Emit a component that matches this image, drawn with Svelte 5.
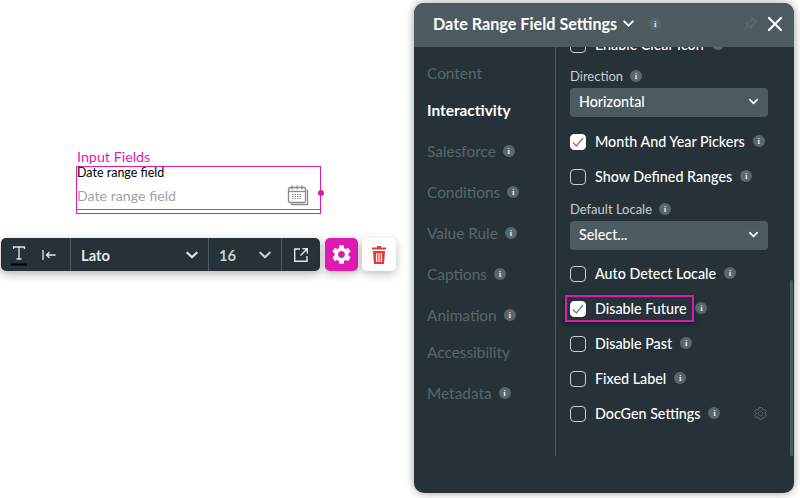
<script>
  const sections = [
    { name: "Content" },
    { name: "Interactivity", active: true },
    { name: "Salesforce", info: true },
    { name: "Conditions", info: true },
    { name: "Value Rule", info: true },
    { name: "Captions", info: true },
    { name: "Animation", info: true },
    { name: "Accessibility" },
    { name: "Metadata", info: true }
  ];

  const settings = [
    { type: "check", label: "Enable Clear Icon", info: true },
    { type: "select", label: "Direction", value: "Horizontal" },
    { type: "check", label: "Month And Year Pickers", checked: true, info: true },
    { type: "check", label: "Show Defined Ranges", info: true },
    { type: "select", label: "Default Locale", value: "Select...", shifted: true },
    { type: "check", label: "Auto Detect Locale", info: true },
    { type: "check", label: "Disable Future", checked: true, info: true, highlight: true },
    { type: "check", label: "Disable Past", info: true },
    { type: "check", label: "Fixed Label", info: true },
    { type: "check", label: "DocGen Settings", info: true, gear: true }
  ];

  const cogPath = "M19.14 12.94c.04-.3.06-.61.06-.94 0-.32-.02-.64-.07-.94l2.03-1.58a.49.49 0 0 0 .12-.61l-1.92-3.32a.488.488 0 0 0-.59-.22l-2.39.96c-.5-.38-1.03-.7-1.62-.94l-.36-2.54a.484.484 0 0 0-.48-.41h-3.84c-.24 0-.43.17-.47.41l-.36 2.54c-.59.24-1.13.57-1.62.94l-2.39-.96c-.22-.08-.47 0-.59.22L2.74 8.87c-.12.21-.08.47.12.61l2.03 1.58c-.05.3-.09.63-.09.94s.02.64.07.94l-2.03 1.58a.49.49 0 0 0-.12.61l1.92 3.32c.12.22.37.29.59.22l2.39-.96c.5.38 1.03.7 1.62.94l.36 2.54c.05.24.24.41.48.41h3.84c.24 0 .44-.17.47-.41l.36-2.54c.59-.24 1.13-.56 1.62-.94l2.39.96c.22.08.47 0 .59-.22l1.92-3.32c.12-.22.07-.47-.12-.61l-2.01-1.58zM12 15.6c-1.98 0-3.6-1.62-3.6-3.6s1.62-3.6 3.6-3.6 3.6 1.62 3.6 3.6-1.62 3.6-3.6 3.6z";
</script>

{#snippet infoIcon()}
  <span class="info">i</span>
{/snippet}

{#snippet chevron(size)}
  <svg class="chev" width={size} height={size} viewBox="0 0 12 12" fill="none" stroke="currentColor" stroke-width="1.8" stroke-linecap="round" stroke-linejoin="round">
    <path d="M2 4l4 4 4-4" />
  </svg>
{/snippet}

<div class="page">
  <div class="field-wrap">
    <div class="field-tag">Input Fields</div>
    <div class="field">
      <div class="field-label">Date range field</div>
      <div class="field-input">
        <span>Date range field</span>
        <svg class="cal" width="22" height="22" viewBox="0 0 22 22" fill="none" stroke="#8a8a8a">
          <path d="M19.5 6.5h1v14h-16v-1" stroke-width="1.3" />
          <rect x="1.5" y="3.5" width="17" height="15" rx="1.5" stroke-width="1.3" />
          <path d="M1.5 7.5h17" stroke-width="1.3" />
          <path d="M5 1.5v4M10 1.5v4M15 1.5v4" stroke-width="1.3" />
          <path d="M5 10.5h10M5 12.5h10M5 14.5h10" stroke-dasharray="1.5 1" />
        </svg>
      </div>
      <span class="handle"></span>
    </div>
  </div>

  <div class="tools">
    <div class="toolbar">
      <div class="tb-icons">
        <svg width="16" height="22" viewBox="0 0 16 22" fill="none" stroke="#e4e7e8" stroke-width="1.3">
          <path d="M2.5 5V3h11v2M8 3v12M5.5 15h5" />
          <path d="M0 20.5h16" stroke="#000" stroke-width="2" />
        </svg>
        <svg width="14" height="12" viewBox="0 0 14 12" fill="none" stroke="#e4e7e8" stroke-width="1.3">
          <path d="M1 1v10M13.5 6H4.5M7.5 3l-3 3 3 3" />
        </svg>
      </div>
      <div class="tb-font"><span>Lato</span>{@render chevron(14)}</div>
      <div class="tb-size"><span>16</span>{@render chevron(14)}</div>
      <div class="tb-link">
        <svg width="16" height="16" viewBox="0 0 16 16" fill="none" stroke="#e4e7e8" stroke-width="1.4">
          <path d="M7 2H1.7v12.3H14V9M9.5 1.7h4.8v4.8M14 2L7.5 8.5" />
        </svg>
      </div>
    </div>
    <button class="btn-gear" aria-label="Settings">
      <svg width="23" height="23" viewBox="0 0 24 24" fill="#fff" fill-rule="evenodd">
        <path d={cogPath} />
      </svg>
    </button>
    <button class="btn-trash" aria-label="Delete">
      <svg width="14" height="18" viewBox="0 0 14 18" fill="#e53935">
        <path d="M5 0h4v1.5h5V3.5H0V1.5h5zM1 5h12l-1 13H2zM4 7v9h1.2V7zM6.4 7v9h1.2V7zM8.8 7v9H10V7z" fill-rule="evenodd" />
      </svg>
    </button>
  </div>

  <div class="panel">
    <header>
      <h1>Date Range Field Settings</h1>
      {@render chevron(13)}
      <span class="head-info">{@render infoIcon()}</span>
      <svg class="pin" width="16" height="16" viewBox="0 0 16 16" fill="none" stroke="#5f6b71" stroke-width="1.2">
        <path d="M10 1.5l4.5 4.5-2 .7-2.8 2.8-.4 2.7-5-5 2.7-.4 2.800-2.800zM6 10l-4.500 4.500" />
      </svg>
      <svg class="close" width="16" height="16" viewBox="0 0 16 16" stroke="#fff" stroke-width="2.2" stroke-linecap="round">
        <path d="M2 2l12 12M14 2L2 14" />
      </svg>
    </header>
    <div class="body">
      <nav>
        {#each sections as s}
          <div class="nav-item" class:active={s.active} class:has-info={s.info}>
            <span>{s.name}</span>
            {#if s.info}{@render infoIcon()}{/if}
          </div>
        {/each}
      </nav>
      <div class="settings">
        <div class="list">
          {#each settings as item}
            {#if item.type === "select"}
              <div class="select-block" class:shifted={item.shifted}>
                <div class="select-label"><span>{item.label}</span>{@render infoIcon()}</div>
                <div class="select"><span>{item.value}</span>{@render chevron(11)}</div>
              </div>
            {:else}
              <div class="row" class:tight={item.highlight}>
                <div class="check-wrap" class:highlight={item.highlight}>
                  <span class="box" class:checked={item.checked}>
                    {#if item.checked}
                      <svg width="14" height="14" viewBox="0 0 14 14" fill="none" stroke="#77797b" stroke-width="1.3">
                        <path d="M2 7.5l3.3 3.5L12 3" />
                      </svg>
                    {/if}
                  </span>
                  <span class="row-label">{item.label}</span>
                </div>
                {@render infoIcon()}
                {#if item.gear}
                  <svg class="gear" width="15" height="15" viewBox="0 0 24 24" fill="none" stroke="#5f6b71" stroke-width="1.5">
                    <path d={cogPath} />
                  </svg>
                {/if}
              </div>
            {/if}
          {/each}
        </div>
        <span class="scrollbar"></span>
      </div>
    </div>
  </div>
</div>

<style>
  :global(body) {
    background: #fff;
    font-family: Lato, "Liberation Sans", sans-serif;
  }

  .page {
    position: relative;
    width: 800px;
    height: 498px;
    overflow: hidden;
  }

  /* canvas element */
  .field-wrap {
    position: absolute;
    left: 76px;
    top: 147px;
    width: 245px;
  }
  .field-tag {
    padding-left: 1px;
    color: #e01ab1;
    font-size: 14.3px;
    line-height: 19px;
  }
  .field {
    position: relative;
    height: 46px;
    border: 1px solid #e01ab1;
  }
  .field-label {
    margin-top: -1px;
    color: #000;
    font-size: 12.5px;
    line-height: 13px;
  }
  .field-input {
    display: flex;
    justify-content: space-between;
    align-items: center;
    height: 28px;
    padding: 2px 11px 0 0;
    border-bottom: 1px solid #3b82d6;
    color: #a3a3a3;
    font-size: 14.2px;
  }
  .handle {
    position: absolute;
    right: -4px;
    top: 23px;
    width: 6px;
    height: 6px;
    border-radius: 50%;
    background: #e01ab1;
  }

  .tools {
    position: absolute;
    left: 1px;
    top: 238px;
    display: flex;
    gap: 4px;
  }
  .toolbar {
    display: flex;
    width: 319px;
    height: 33px;
    margin-right: 1px;
    border-radius: 5px;
    background: #263238;
    color: #e4e7e8;
    font-size: 14.7px;
    font-weight: 700;
    box-shadow: 0 3px 10px rgba(0, 0, 0, 0.3);
  }
  .toolbar > div {
    display: flex;
    align-items: center;
    box-sizing: border-box;
    border-right: 1px solid #4d5a60;
  }
  .tb-icons {
    width: 70px;
    padding-left: 10px;
    gap: 15px;
  }
  .tb-font {
    width: 138px;
    padding: 0 9px 0 10px;
    justify-content: space-between;
  }
  .tb-size {
    width: 73px;
    padding: 0 9px 0 10px;
    justify-content: space-between;
    color: #c9cfd2;
  }
  .toolbar > .tb-link {
    flex: 1;
    justify-content: center;
    border-right: 0;
  }
  .btn-gear,
  .btn-trash {
    display: flex;
    align-items: center;
    justify-content: center;
    width: 33px;
    height: 33px;
    padding: 0;
    border: 0;
    border-radius: 5px;
    box-shadow: 0 3px 10px rgba(0, 0, 0, 0.25);
  }
  .btn-gear {
    background: #e01ab1;
  }
  .btn-trash {
    background: #fff;
    width: 34px;
  }

  /* floating window */
  .panel {
    position: absolute;
    left: 414px;
    top: 3px;
    width: 380px;
    height: 490px;
    display: flex;
    flex-direction: column;
    border-radius: 10px;
    overflow: hidden;
    background: #263238;
    box-shadow: 0 0 8px rgba(0, 0, 0, 0.4);
  }
  header {
    display: flex;
    align-items: center;
    box-sizing: border-box;
    height: 44px;
    flex: none;
    padding: 0 11px 3px 19px;
    background: #4d5a60;
    color: #fff;
  }
  h1 {
    margin: 0 5px 0 0;
    font-size: 16.2px;
    font-weight: 700;
    color: #fff;
  }
  .head-info {
    margin-left: 14px;
    display: flex;
  }
  .pin {
    margin-left: auto;
    margin-right: 9px;
  }

  .body {
    display: flex;
    flex: 1;
    min-height: 0;
    height: 409px;
  }
  nav {
    width: 142px;
    height: 409px;
    box-sizing: border-box;
    flex: none;
    padding: 7px 0 0 13px;
    border-right: 1px solid #4d5a60;
    font-size: 15.4px;
    color: #59666c;
  }
  .nav-item {
    display: flex;
    align-items: center;
    gap: 7px;
    height: 37px;
  }
  .nav-item.has-info {
    margin-top: 4px;
  }
  .nav-item.active {
    color: #fff;
    font-weight: 700;
  }

  .settings {
    position: relative;
    flex: 1;
    height: 409px;
    overflow: hidden;
  }
  .list {
    margin-top: -20px;
    padding: 0 26px 0 14px;
  }
  .row {
    display: flex;
    align-items: center;
    gap: 8px;
    height: 35px;
    color: #fff;
    font-size: 14.3px;
    font-weight: 500;
  }
  .row .info {
    margin-top: -2px;
  }
  .row.tight {
    gap: 1px;
  }
  .check-wrap {
    display: flex;
    align-items: center;
    gap: 9px;
    height: 27px;
  }
  .check-wrap.highlight {
    margin-left: -5px;
    padding: 0 6px 0 3px;
    border: 2px solid #e01ab1;
    box-sizing: border-box;
    box-shadow: 0 2px 6px rgba(0, 0, 0, 0.45);
  }
  .box {
    display: flex;
    align-items: center;
    justify-content: center;
    box-sizing: border-box;
    width: 16px;
    height: 16px;
    border: 1px solid #c9ced0;
    border-radius: 4px;
  }
  .box.checked {
    background: #fff;
    border-color: #fff;
  }
  .gear {
    margin-left: auto;
  }
  .select-block {
    padding: 4px 0 7px;
  }
  .select-block.shifted {
    padding: 5px 0 6px;
  }
  .select-label {
    display: flex;
    align-items: center;
    gap: 7px;
    height: 20px;
    margin-bottom: 2px;
    color: #c9cfd2;
    font-size: 13px;
  }
  .select {
    display: flex;
    align-items: center;
    justify-content: space-between;
    box-sizing: border-box;
    height: 29px;
    padding: 0 9px 2px;
    border-radius: 4px;
    background: #4d5a60;
    color: #fff;
    font-size: 14.3px;
    font-weight: 500;
  }
  .scrollbar {
    position: absolute;
    right: 1px;
    top: 233px;
    width: 3px;
    height: 176px;
    border-radius: 2px;
    background: #4d5a60;
  }
  .info {
    display: inline-flex;
    align-items: center;
    justify-content: center;
    flex: none;
    width: 12px;
    height: 12px;
    border-radius: 50%;
    background: #59666c;
    color: #e4e7e8;
    font: 700 9px/12px "Liberation Serif", serif;
  }
  .chev {
    flex: none;
  }
</style>
